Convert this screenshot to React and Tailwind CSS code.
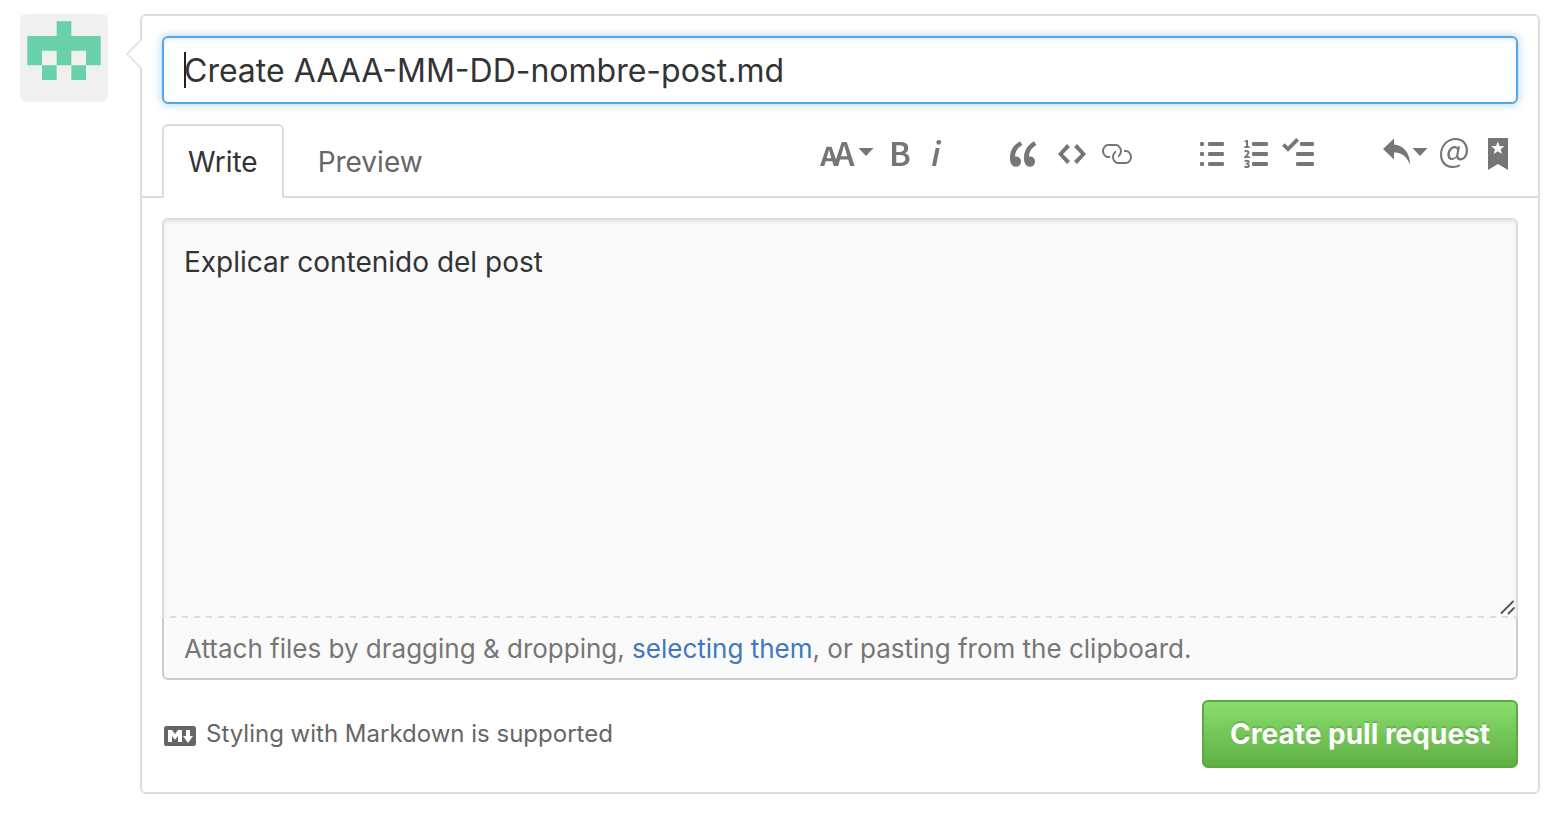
import React from "react";

const icons = {
  textSize: {
    box: "0 0 18 16",
    size: "w-9",
    d: "M13.62 9.08L12.1 3.66h-.06l-1.5 5.42h3.08zM5.7 10.13S4.68 6.52 4.53 6.02h-.08l-1.13 4.11H5.7zM17.31 14h-2.25l-.95-3.25h-4.07L9.09 14H6.84l-.69-2.33H2.87L2.17 14H0l3.3-9.59h2.5l2.17 6.34L10.86 2h2.52l3.94 12h-.01z",
  },
  bold: {
    box: "0 0 10 16",
    size: "w-5",
    d: "M1 2h3.83c2.48 0 4.3.75 4.3 2.95 0 1.14-.63 2.23-1.67 2.61v.06c1.33.3 2.3 1.23 2.3 2.86 0 2.39-1.97 3.52-4.61 3.52H1V2zm3.66 4.95c1.67 0 2.38-.66 2.38-1.69 0-1.17-.78-1.61-2.34-1.61H3.13v3.3h1.53zm.27 5.39c1.77 0 2.75-.64 2.75-1.98 0-1.27-.95-1.81-2.75-1.81h-1.8v3.8h1.8v-.01z",
  },
  italic: {
    box: "0 0 6 16",
    size: "w-3",
    d: "M2.81 5h1.98L3 14H1l1.81-9zm.36-2.7c0-.7.58-1.3 1.33-1.3.56 0 1.13.38 1.13 1.03 0 .75-.59 1.3-1.33 1.3-.58 0-1.13-.38-1.13-1.03z",
  },
  quote: {
    box: "0 0 14 16",
    size: "w-7",
    d: "M6.16 3.5C3.73 5.06 2.55 6.67 2.55 9.36c.16-.05.3-.05.44-.05 1.27 0 2.5.86 2.5 2.41 0 1.61-1.03 2.61-2.5 2.61-1.9 0-2.99-1.52-2.99-4.25 0-3.8 1.75-6.53 5.02-8.42L6.16 3.5zm7 0c-2.43 1.56-3.61 3.17-3.61 5.86.16-.05.3-.05.44-.05 1.27 0 2.5.86 2.5 2.41 0 1.61-1.03 2.61-2.5 2.61-1.89 0-2.98-1.52-2.98-4.25 0-3.8 1.75-6.53 5.02-8.42l1.14 1.84h-.01z",
  },
  code: {
    box: "0 0 14 16",
    size: "w-7",
    d: "M9.5 3L8 4.5 11.5 8 8 11.5 9.5 13 14 8 9.5 3zm-5 0L0 8l4.5 5L6 11.5 2.5 8 6 4.5 4.5 3z",
  },
  link: {
    box: "0 0 16 16",
    size: "w-8",
    d: "M4 9h1v1H4c-1.5 0-3-1.69-3-3.5S2.55 3 4 3h4c1.45 0 3 1.69 3 3.5 0 1.41-.91 2.72-2 3.25V8.59c.58-.45 1-1.27 1-2.09C10 5.22 8.98 4 8 4H4c-.98 0-2 1.22-2 2.5S3 9 4 9zm9-3h-1v1h1c1 0 2 1.22 2 2.5S13.98 12 13 12H9c-.98 0-2-1.22-2-2.5 0-.83.42-1.64 1-2.09V6.25c-1.09.53-2 1.84-2 3.25C6 11.31 7.55 13 9 13h4c1.45 0 3-1.69 3-3.5S14.5 6 13 6z",
  },
  bullets: {
    box: "0 0 12 16",
    size: "w-6",
    d: "M2 13c0 .59 0 1-.59 1H.59C0 14 0 13.59 0 13c0-.59 0-1 .59-1h.81c.59 0 .59.41.59 1H2zm2.59-9h6.81c.59 0 .59-.41.59-1 0-.59 0-1-.59-1H4.59C4 2 4 2.41 4 3c0 .59 0 1 .59 1zM1.41 7H.59C0 7 0 7.41 0 8c0 .59 0 1 .59 1h.81c.59 0 .59-.41.59-1 0-.59 0-1-.59-1h.01zm0-5H.59C0 2 0 2.41 0 3c0 .59 0 1 .59 1h.81c.59 0 .59-.41.59-1 0-.59 0-1-.59-1h.01zm10 5H4.59C4 7 4 7.41 4 8c0 .59 0 1 .59 1h6.81c.59 0 .59-.41.59-1 0-.59 0-1-.59-1h.01zm0 5H4.59C4 12 4 12.41 4 13c0 .59 0 1 .59 1h6.81c.59 0 .59-.41.59-1 0-.59 0-1-.59-1h.01z",
  },
  numbers: {
    box: "0 0 12 16",
    size: "w-6",
    d: "M12 13c0 .59 0 1-.59 1H4.59C4 14 4 13.59 4 13c0-.59 0-1 .59-1h6.81c.59 0 .59.41.59 1H12zM4.59 4h6.81c.59 0 .59-.41.59-1 0-.59 0-1-.59-1H4.59C4 2 4 2.41 4 3c0 .59 0 1 .59 1zm6.81 3H4.59C4 7 4 7.41 4 8c0 .59 0 1 .59 1h6.81c.59 0 .59-.41.59-1 0-.59 0-1-.59-1zM2 1h-.72c-.3.19-.58.25-1.03.34V2H1v2.14H.16V5h2.67v-.86H2V1zm.25 8.13c-.17 0-.45.03-.66.06.53-.56 1.14-1.25 1.14-1.89C2.72 6.52 2.17 6 1.37 6c-.59 0-.97.2-1.38.64l.58.58c.19-.19.38-.38.64-.38.28 0 .48.16.48.52 0 .53-.77 1.2-1.7 2.06V10h3l-.09-.88h-.66l.01.01zm-.08 3.78v-.03c.44-.19.64-.47.64-.86 0-.7-.56-1.11-1.44-1.11-.48 0-.89.19-1.28.52l.55.64c.25-.2.44-.31.69-.31.27 0 .42.13.42.36 0 .27-.2.44-.86.44v.75c.83 0 .98.17.98.47 0 .25-.23.38-.58.38-.28 0-.56-.14-.81-.38l-.48.66c.3.36.77.56 1.41.56.83 0 1.53-.41 1.53-1.16 0-.5-.31-.81-.77-.94v.01z",
  },
  tasks: {
    box: "0 0 16 16",
    size: "w-8",
    d: "M15.41 9H7.59C7 9 7 8.59 7 8c0-.59 0-1 .59-1h7.81c.59 0 .59.41.59 1 0 .59 0 1-.59 1h.01zM9.59 4C9 4 9 3.59 9 3c0-.59 0-1 .59-1h5.81c.59 0 .59.41.59 1 0 .59 0 1-.59 1H9.59zM0 3.91l1.41-1.3L3 4.2 7.09 0 8.5 1.41 3 6.91l-3-3zM7.59 12h7.81c.59 0 .59.41.59 1 0 .59 0 1-.59 1H7.59C7 14 7 13.59 7 13c0-.59 0-1 .59-1z",
  },
  reply: {
    box: "0 0 14 16",
    size: "w-7",
    d: "M6 3.2c3.92.44 8 3.125 8 10.1-2.312-5.062-4.75-6-8-6V10.8L.5 5.5 6 .2v3z",
  },
  mention: {
    box: "0 0 14 16",
    size: "w-7",
    d: "M6.58 15c1.25 0 2.52-.31 3.56-.94l-.42-.94c-.84.52-1.89.83-3.03.83-3.23 0-5.64-2.08-5.64-5.72 0-4.37 3.23-7.18 6.58-7.18 3.45 0 5.22 2.19 5.22 5.2 0 2.39-1.34 3.86-2.5 3.86-1.05 0-1.36-.73-1.05-2.19l.73-3.75H8.98l-.11.72c-.41-.63-.94-.83-1.56-.83-2.19 0-3.66 2.39-3.66 4.38 0 1.67.94 2.61 2.3 2.61.84 0 1.67-.53 2.3-1.25.11.94.94 1.45 1.98 1.45 1.67 0 3.77-1.67 3.77-5C14 2.61 11.59 0 7.83 0 3.66 0 0 3.33 0 8.33 0 12.71 2.92 15 6.58 15zm-.31-5c-.73 0-1.36-.52-1.36-1.67 0-1.45.94-3.22 2.41-3.22.52 0 .84.2 1.25.83l-.52 3.02c-.63.73-1.25 1.05-1.78 1.05V10z",
  },
  savedReply: {
    box: "0 0 10 16",
    size: "w-5",
    d: "M0 0v16l5-3 5 3V0H0zm4.9 1.7l.85 2.3 2.45.1-1.9 1.55.65 2.4-2.05-1.4-2.05 1.4.65-2.4L1.6 4.1l2.45-.1.85-2.3z",
  },
  markdown: {
    box: "0 0 16 16",
    size: "w-8",
    d: "M14.85 3H1.15C.52 3 0 3.52 0 4.15v7.69C0 12.48.52 13 1.15 13h13.69c.64 0 1.15-.52 1.15-1.15v-7.7C16 3.52 15.48 3 14.85 3zM9 11H7V8L5.5 9.92 4 8v3H2V5h2l1.5 2L7 5h2v6zm2.99.5L9.5 8H11V5h2v3h1.5l-2.51 3.5z",
  },
};

function Icon({ name }) {
  const { box, size, d } = icons[name];
  return (
    <svg viewBox={box} className={`h-8 shrink-0 fill-current ${size}`} aria-hidden="true">
      <path fillRule="evenodd" d={d} />
    </svg>
  );
}

function Caret() {
  return (
    <svg viewBox="0 0 16 8" className="mb-1 ml-0.5 h-2 w-4 fill-current" aria-hidden="true">
      <path d="M0.5 0h15L8 8z" />
    </svg>
  );
}

const toolGroups = [
  [
    { name: "textSize", label: "Add header text", pad: "pr-1.5", menu: true },
    { name: "bold", label: "Add bold text", pad: "px-2.5" },
    { name: "italic", label: "Add italic text", pad: "pl-2.5 pr-1" },
  ],
  [
    { name: "quote", label: "Insert a quote", pad: "px-2.5" },
    { name: "code", label: "Insert code", pad: "px-2.5" },
    { name: "link", label: "Add a link", pad: "px-1" },
  ],
  [
    { name: "bullets", label: "Add a bulleted list", pad: "px-2.5" },
    { name: "numbers", label: "Add a numbered list", pad: "px-2.5" },
    { name: "tasks", label: "Add a task list", pad: "px-1" },
  ],
  [
    { name: "reply", label: "Insert a reply", pad: "pl-2.5 pr-0.5", menu: true },
    { name: "mention", label: "Mention a user", pad: "px-2.5" },
    { name: "savedReply", label: "Saved replies", pad: "px-2.5" },
  ],
];

function Toolbar() {
  return (
    <div role="toolbar" aria-label="Formatting" className="flex gap-[54px] pt-3.5 text-[#767676]">
      {toolGroups.map((group, i) => (
        <div key={i} className="flex items-start">
          {group.map((tool) => (
            <button key={tool.name} type="button" aria-label={tool.label} className={`flex items-center ${tool.pad}`}>
              <Icon name={tool.name} />
              {tool.menu && <Caret />}
            </button>
          ))}
        </div>
      ))}
    </div>
  );
}

function Avatar() {
  return (
    <svg viewBox="0 0 12 12" role="img" aria-label="User avatar" className="size-[88px] shrink-0 rounded-md bg-[#f0f0f0]">
      <g fill="#68d1a9">
        <path d="M5 1h2v2h4v4H9V5H7v2H5V5H3v2H1V3h4z" />
        <path d="M3 7h2v2H3zM7 7h2v2H7z" />
      </g>
    </svg>
  );
}

export default function App() {
  return (
    <main className="flex items-start gap-8 bg-white pt-3.5 pr-7 pb-8 pl-5 font-['Inter','Liberation_Sans',sans-serif] text-[#333]">
      <Avatar />
      <form className="relative min-w-0 flex-1 rounded-md border-2 border-[#ddd] pb-6" onSubmit={(e) => e.preventDefault()}>
        <svg viewBox="0 0 16 30" className="absolute top-[23px] -left-4 h-[30px] w-4" aria-hidden="true">
          <path d="M16 1v28" stroke="#fff" strokeWidth="4" />
          <path d="M15 1L1 15l14 14" fill="#fff" stroke="#ddd" strokeWidth="1.5" />
        </svg>

        <div className="relative mx-5 mt-5">
          <input
            type="text"
            aria-label="Title"
            defaultValue="Create AAAA-MM-DD-nombre-post.md"
            className="block h-[68px] w-full rounded-md border-2 border-[#51a7e8] bg-white px-5 text-[32px] shadow-[inset_0_2px_4px_rgba(0,0,0,0.075),0_0_10px_rgba(81,167,232,0.5)] outline-none"
          />
          <span className="absolute top-4 left-[22px] h-9 w-0.5 bg-[#222]" aria-hidden="true" />
        </div>

        <div className="mt-5 flex justify-between border-b-2 border-[#ddd] px-5">
          <div role="tablist" className="-mb-0.5 flex text-[28px] leading-10">
            <button type="button" role="tab" aria-selected="true" className="rounded-t-md border-2 border-b-0 border-[#ddd] bg-white px-6 py-4">
              Write
            </button>
            <button type="button" role="tab" aria-selected="false" className="border-2 border-b-0 border-transparent px-8 py-4 text-[#666]">
              Preview
            </button>
          </div>
          <Toolbar />
        </div>

        <div className="mx-5 mt-5">
          <div className="relative">
            <textarea
              aria-label="Description"
              defaultValue="Explicar contenido del post"
              className="block h-[400px] w-full resize-none rounded-t-md border-2 border-b-0 border-[#ddd] bg-[#fafafa] px-5 py-5 text-[28px] leading-[45px] shadow-[inset_0_2px_4px_rgba(0,0,0,0.075)] outline-none"
            />
            <svg viewBox="0 0 16 16" className="absolute right-0.5 bottom-0.5 size-4" aria-hidden="true">
              <path d="M1.5 13L13 1.5M8.5 13.5L14 8" fill="none" stroke="#555" strokeWidth="1.8" strokeLinecap="round" />
            </svg>
            <svg className="absolute bottom-0 left-0 h-0.5 w-full" aria-hidden="true">
              <line x1="8" y1="1" x2="100%" y2="1" stroke="#ddd" strokeWidth="2" strokeDasharray="6 6" />
            </svg>
          </div>
          <p className="rounded-b-md border-2 border-t-0 border-[#ccc] bg-[#fafafa] px-5 pt-[11px] pb-[9px] text-[26px] leading-10 text-[#767676]">
            Attach files by dragging &amp; dropping,{" "}
            <a href="#files" className="text-[#4078c0]">selecting them</a>, or pasting from the clipboard.
          </p>
        </div>

        <div className="mx-5 mt-5 flex items-start justify-between">
          <a href="#markdown" className="mt-5 ml-0.5 flex items-start gap-2.5 text-2xl leading-7 text-[#666]">
            <Icon name="markdown" />
            Styling with Markdown is supported
          </a>
          <button
            type="submit"
            className="h-[68px] rounded-md border-2 border-[#5ca941] bg-linear-to-b from-[#8add6d] to-[#60b044] px-[26px] text-[28px] font-bold text-white [text-shadow:0_-2px_0_rgba(0,0,0,0.15)]"
          >
            Create pull request
          </button>
        </div>
      </form>
    </main>
  );
}
